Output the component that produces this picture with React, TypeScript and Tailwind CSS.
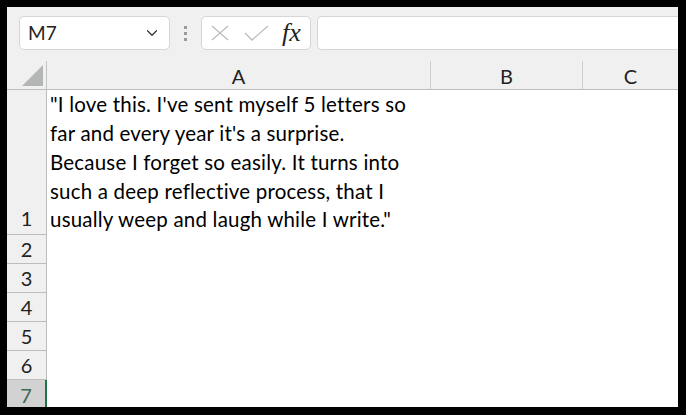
import { ChevronDown } from "lucide-react";

const rows = [2, 3, 4, 5, 6];

const font = { fontFamily: "Lato, 'Open Sans', sans-serif" };

export default function App() {
  return (
    <div className="w-[686px] h-[415px] bg-black pt-[7px] pl-[7px] pr-[8px] pb-[8px]">
      <div className="flex h-full w-full flex-col overflow-hidden bg-white" style={font}>
        {/* toolbar */}
        <div className="flex h-[53px] shrink-0 items-start bg-[#f0f0f0] pt-[9px] pl-[12px]">
          <div className="flex h-[34px] w-[151px] items-center justify-between rounded-[5px] border border-[#d6d6d6] bg-white pl-[8px] pr-[8px]">
            <span className="text-[19px] text-[#222]">M7</span>
            <ChevronDown className="h-[18px] w-[18px] text-[#333]" strokeWidth={1.6} />
          </div>
          <div className="flex h-[34px] w-[31px] flex-col items-center justify-center gap-[3px]">
            <div className="h-[3px] w-[3px] bg-[#9b9b9b]" />
            <div className="h-[3px] w-[3px] bg-[#9b9b9b]" />
            <div className="h-[3px] w-[3px] bg-[#9b9b9b]" />
          </div>
          <div className="flex h-[34px] w-[110px] items-center rounded-[5px] border border-[#d6d6d6] bg-white pl-[9px]">
            <svg width="18" height="16" viewBox="0 0 18 16" className="text-[#bdbdbd]">
              <path d="M1 1 L17 15 M17 1 L1 15" stroke="currentColor" strokeWidth="1.3" fill="none" />
            </svg>
            <svg width="25" height="16" viewBox="0 0 25 16" className="ml-[15px] text-[#bdbdbd]">
              <path d="M1 8 L8 15 L24 1" stroke="currentColor" strokeWidth="1.3" fill="none" />
            </svg>
            <span
              className="ml-[13px] text-[26px] italic leading-none text-[#222]"
              style={{ fontFamily: "'Liberation Serif', 'DejaVu Serif', serif" }}
            >
              fx
            </span>
          </div>
          <div className="ml-[6px] h-[34px] flex-1 rounded-l-[5px] border border-r-0 border-[#d6d6d6] bg-white" />
        </div>

        {/* column headers */}
        <div className="flex h-[30px] shrink-0 border-b border-[#bdbdbd] bg-[#f0f0f0]">
          <div className="relative w-[40px] shrink-0 border-r border-[#c3c3c3] mt-[1px]">
            <svg width="21" height="21" viewBox="0 0 21 21" className="absolute left-[15px] top-[4px]">
              <path d="M21 0 L21 21 L0 21 Z" fill="#b4b6b6" />
            </svg>
          </div>
          <div className="flex w-[384px] shrink-0 items-center justify-center border-r border-[#cfcfcf] mt-[1px] pt-[2px] text-[20px] text-[#222]">
            A
          </div>
          <div className="flex w-[152px] shrink-0 items-center justify-center border-r border-[#cfcfcf] mt-[1px] pt-[2px] text-[20px] text-[#222]">
            B
          </div>
          <div className="flex w-[95px] shrink-0 items-center justify-center mt-[1px] pt-[2px] text-[20px] text-[#222]">
            C
          </div>
        </div>

        {/* row 1 */}
        <div className="flex h-[145px] shrink-0">
          <div className="flex w-[40px] shrink-0 items-end justify-center border-b border-r border-[#bdbdbd] bg-[#f0f0f0] pb-[1px] text-[20px] leading-[29px] text-[#222]">
            1
          </div>
          <div className="flex flex-1 items-end pl-[3px] pb-[1px] text-[20.5px] leading-[28.75px] tracking-[0.2px] text-black whitespace-nowrap">
            <div>
              "I love this. I've sent myself 5 letters so
              <br />
              far and every year it's a surprise.
              <br />
              Because I forget so easily. It turns into
              <br />
              such a deep reflective process, that I
              <br />
              usually weep and laugh while I write."
            </div>
          </div>
        </div>

        {rows.map((r) => (
          <div key={r} className="flex h-[29px] shrink-0">
            <div className="flex w-[40px] shrink-0 items-center justify-center border-b border-r border-[#bdbdbd] bg-[#f0f0f0] text-[20px] text-[#222]">
              {r}
            </div>
            <div className="flex-1" />
          </div>
        ))}

        {/* row 7 (selected) */}
        <div className="flex h-[27px] shrink-0">
          <div className="flex w-[40px] shrink-0 items-center justify-center border-r-2 border-[#217346] bg-[#d2d2d2] pt-[2px] text-[20px] text-[#3c6a55]">
            7
          </div>
          <div className="flex-1" />
        </div>
      </div>
    </div>
  );
}
